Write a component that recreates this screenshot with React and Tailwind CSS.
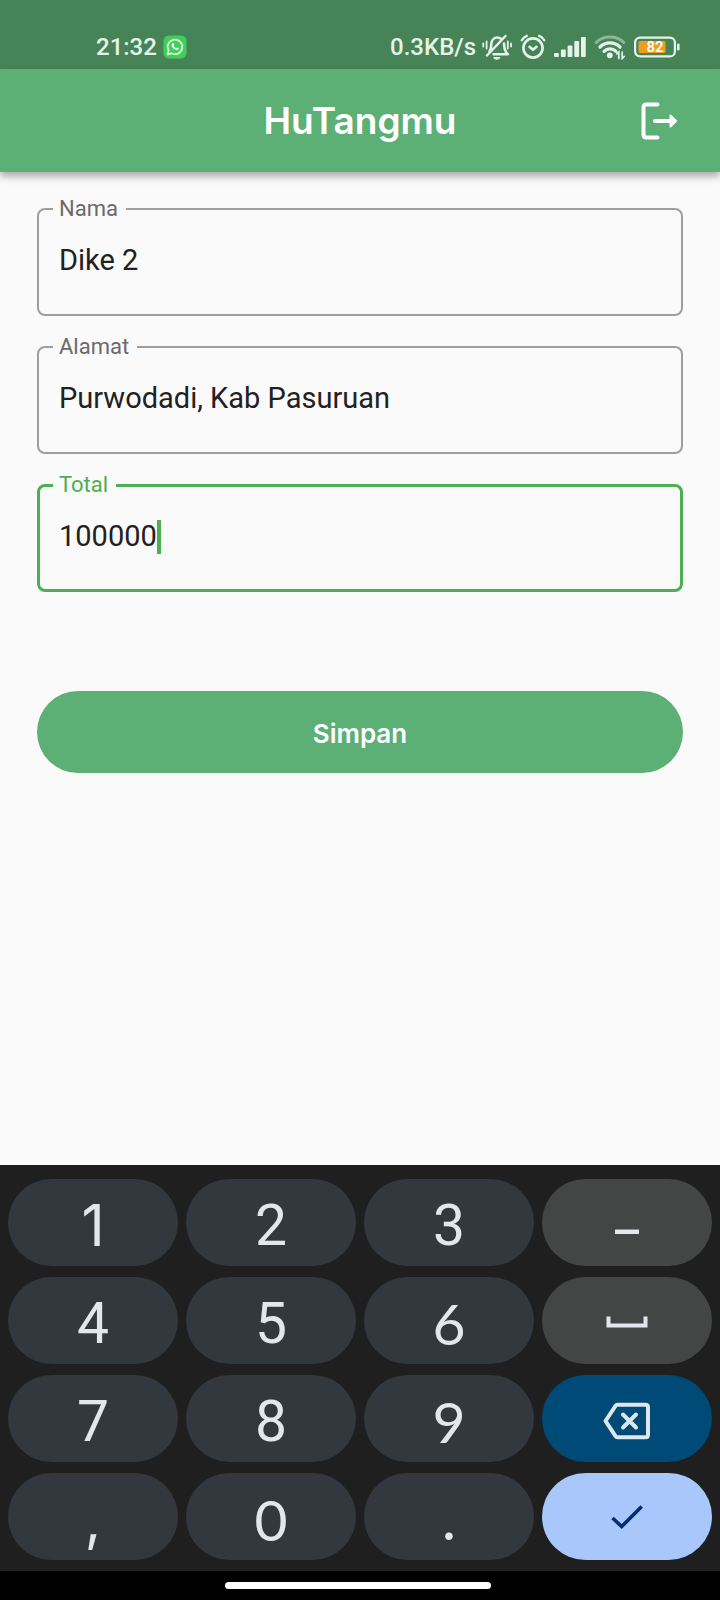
import { useState } from "react";

function WhatsAppBadge() {
  return (
    <svg viewBox="0 0 24 24" className="size-6 shrink-0" aria-hidden="true">
      <rect x="0.5" y="0.5" width="23" height="23" rx="5.5" fill="#3fcf5a" />
      <path
        d="M4.600 19.400l1-4a7.300 7.300 0 1 1 2.900 2.900z"
        fill="none"
        stroke="#e9fbee"
        strokeWidth="1.600"
        strokeLinejoin="round"
      />
      <path
        d="M9.600 8.200c.5-.3.900-.2 1.100.3l.5 1.200c.1.300-.6 1-.5 1.200.5 1 1.300 1.800 2.400 2.300.3.100 1-.9 1.300-.8l1.300.7c.3.200.2 1-.3 1.500-.8.700-2 .6-3.300 0-1.500-.7-2.700-1.900-3.300-3.300-.5-1.200-.2-2.500.8-3.100z"
        fill="#e9fbee"
      />
    </svg>
  );
}

function MutedBell() {
  return (
    <svg viewBox="0 0 30 26" className="h-[26px] w-[30px] shrink-0" aria-hidden="true" fill="none" stroke="#e6f3e9" strokeLinecap="round" strokeLinejoin="round">
      <path d="M7.500 17.500c1.500-2 1.700-4 1.800-7.500C9.500 6 12 3.500 15.500 3.500c1.500 0 2.500.4 3.400 1.200" strokeWidth="2.500" />
      <path d="M22 9.500c.3 5 .6 8 4 10.700H11.500" strokeWidth="2.500" />
      <path d="M23.500 2L5 21.500" strokeWidth="2.500" />
      <path d="M12 23.800h5.500c-1 1.500-4.500 1.500-5.500 0z" strokeWidth="1.500" fill="#e6f3e9" />
      <path d="M1.200 9.500v3M4.600 7.500v7M25.800 7.500v7M29 9.500v3" strokeWidth="1.800" />
    </svg>
  );
}

function AlarmClock() {
  return (
    <svg viewBox="0 0 26 26" className="size-[26px] shrink-0" aria-hidden="true" fill="none" stroke="#e6f3e9" strokeWidth="2.600" strokeLinecap="round" strokeLinejoin="round">
      <circle cx="13" cy="14" r="9.600" />
      <path d="M1.800 6.200C3 4 4.500 2.600 6.800 1.800M24.200 6.200C23 4 21.500 2.600 19.200 1.800" strokeWidth="2.400" />
      <path d="M9.500 12.800l3.500 3 3.500-3" />
    </svg>
  );
}

function SignalBars() {
  return (
    <svg viewBox="0 0 32 22" className="h-[22px] w-8 shrink-0" aria-hidden="true" fill="#e6f3e9">
      <rect x="0" y="17" width="4.800" height="4" rx="1" />
      <rect x="6.900" y="13.500" width="4.800" height="7.500" rx="1" />
      <rect x="13.600" y="9.500" width="4.800" height="11.500" rx="1" />
      <rect x="20.300" y="5" width="4.800" height="16" rx="1" />
      <rect x="27" y="1" width="4.800" height="20" rx="1" />
    </svg>
  );
}

function Wifi() {
  return (
    <svg viewBox="0 0 32 26" className="h-[26px] w-8 shrink-0" aria-hidden="true" fill="none" strokeLinecap="round">
      <path d="M2.200 8.500C9.500 1.200 22.500 1.200 29.800 8.500" stroke="#8db79a" strokeWidth="3" />
      <path d="M6 13C11.500 7.500 20.500 7.500 26 13" stroke="#e6f3e9" strokeWidth="3.200" />
      <path d="M10 17.300c3.300-3.300 8.700-3.300 12 0" stroke="#e6f3e9" strokeWidth="3.200" />
      <circle cx="15.800" cy="21.300" r="2.900" fill="#e6f3e9" />
      <path d="M24.800 24.500v-6.500l-2 2M28.200 18v6.500l2-2" stroke="#e6f3e9" strokeWidth="1.700" />
    </svg>
  );
}

function Battery() {
  return (
    <svg viewBox="0 0 46 22" className="h-[22px] w-[46px] shrink-0" role="img" aria-label="82%">
      <rect x="1.100" y="1.600" width="39.800" height="18.800" rx="5" fill="none" stroke="#e6f3e9" strokeWidth="2.200" />
      <rect x="4.500" y="5" width="27" height="12" rx="1.500" fill="#ee9d20" />
      <rect x="43" y="7.500" width="2.600" height="7" rx="1.300" fill="#e6f3e9" />
      <text x="21" y="16" textAnchor="middle" fontSize="15" fontWeight="600" fill="#fff" fontFamily="Roboto, sans-serif">
        82
      </text>
    </svg>
  );
}

function StatusBar() {
  return (
    <div className="flex h-[69px] items-center justify-between bg-[#468458] pt-[25px] pr-10 pl-24 text-[24px] font-medium text-[#e6f3e9]">
      <div className="flex items-center gap-1.5">
        <span>21:32</span>
        <WhatsAppBadge />
      </div>
      <div className="flex items-center gap-2">
        <div className="flex items-center gap-1.5">
          <span>0.3KB/s</span>
          <MutedBell />
        </div>
        <AlarmClock />
        <SignalBars />
        <Wifi />
        <Battery />
      </div>
    </div>
  );
}

function AppBar() {
  return (
    <header className="relative grid h-[103px] grid-cols-[1fr_auto_1fr] items-center bg-[#5db075] px-10 shadow-[0_4px_8px_rgba(0,0,0,0.35)]">
      <h1 className="col-start-2 font-[Inter,sans-serif] text-[37px] font-semibold text-white">HuTangmu</h1>
      <button type="button" aria-label="Keluar" className="cursor-pointer justify-self-end">
        <svg viewBox="0 0 40 40" className="size-10" fill="none" stroke="#fff" strokeWidth="4" strokeLinecap="round" strokeLinejoin="round">
          <path d="M17.500 3.500H6.500q-3 0-3 3v27q0 3 3 3H17.500" />
          <path d="M15 20H30" />
          <path d="M30.500 14.500L36 20l-5.500 5.500z" fill="#fff" strokeWidth="2" />
        </svg>
      </button>
    </header>
  );
}

function Field({ id, label, value, onChange }) {
  return (
    <fieldset className="h-[119px] min-w-0 rounded-lg border-2 border-[#9e9e9e] pr-5 pl-[14px]">
      <legend className="flex h-6 items-center pr-2 pl-1.5 text-[22px] leading-6 text-[#6a6a6a]">
        <label htmlFor={id}>{label}</label>
      </legend>
      <input
        id={id}
        type="text"
        value={value}
        onChange={(e) => onChange(e.target.value)}
        className="mt-[22px] h-9 w-full bg-transparent pl-1.5 text-[29px] text-[#212121] outline-none"
      />
    </fieldset>
  );
}

function ActiveField({ id, label, value, onChange }) {
  return (
    <fieldset className="h-[119px] min-w-0 rounded-lg border-3 border-[#4caf50] pr-5 pl-[13px]">
      <legend className="flex h-6 items-center pr-2 pl-1.5 text-[22px] leading-6 text-[#4caf50]">
        <label htmlFor={id}>{label}</label>
      </legend>
      <div className="mt-[22px] flex items-center">
        <input
          id={id}
          type="text"
          inputMode="numeric"
          value={value}
          onChange={(e) => onChange(e.target.value)}
          className="field-sizing-content h-9 bg-transparent pl-1.5 text-[29px] text-[#212121] caret-transparent outline-none"
        />
        <span className="h-[34px] w-1 bg-[#4caf50]" />
      </div>
    </fieldset>
  );
}

const BASE = "flex h-[87px] cursor-pointer items-center justify-center rounded-full ";
const GLYPH = "pt-1.5 text-[57px] leading-none text-[#e3e6ea] ";
const ROBOTO = "font-[Roboto,sans-serif] ";
const INTER = "font-[Inter,sans-serif] ";
const NOTO = "font-['Noto_Sans',sans-serif] ";
const LATO = "font-[Lato,sans-serif] ";

function DigitKey({ children, face = ROBOTO }) {
  return (
    <button type="button" className={BASE + GLYPH + face + "bg-[#33373e]"}>
      {children}
    </button>
  );
}

function Keyboard() {
  return (
    <div className="grid grid-cols-4 gap-x-2 gap-y-[11px] bg-[#1f1f1f] px-2 pt-[14px] pb-[11px]">
      <DigitKey face={INTER}>1</DigitKey>
      <DigitKey>2</DigitKey>
      <DigitKey>3</DigitKey>
      <button type="button" className={BASE + GLYPH + NOTO + "bg-[#444645]"}>
        –
      </button>
      <DigitKey>4</DigitKey>
      <DigitKey>5</DigitKey>
      <DigitKey face={LATO}>6</DigitKey>
      <button type="button" aria-label="Spasi" className={BASE + "bg-[#444645] pt-0.5"}>
        <svg viewBox="0 0 42 12" className="h-3 w-[42px]" fill="none" stroke="#e3e6ea" strokeWidth="4">
          <path d="M2.500 0.500V9.500H39.500V0.500" />
        </svg>
      </button>
      <DigitKey>7</DigitKey>
      <DigitKey>8</DigitKey>
      <DigitKey face={LATO}>9</DigitKey>
      <button type="button" aria-label="Hapus" className={BASE + "bg-[#004a77] pt-1"}>
        <svg viewBox="0 0 48 38" className="h-[38px] w-12" fill="none" stroke="#dde7ee" strokeWidth="4" strokeLinecap="round" strokeLinejoin="round">
          <path d="M14.500 2.800H42.500q2.500 0 2.500 2.500V32.700q0 2.500-2.500 2.500H14.500q-1.300 0-2-1L2.500 19 12.500 3.800q.7-1 2-1z" />
          <path d="M20 12.500l13 13M33 12.500l-13 13" />
        </svg>
      </button>
      <DigitKey face={INTER}>,</DigitKey>
      <DigitKey face={LATO}>0</DigitKey>
      <DigitKey face={INTER}>.</DigitKey>
      <button type="button" aria-label="Selesai" className={BASE + "bg-[#a8c7fa]"}>
        <svg viewBox="0 0 32 24" className="h-6 w-8" fill="none" stroke="#062e6f" strokeWidth="3.600">
          <path d="M1.500 13L10.700 21.500 30.700 1.500" />
        </svg>
      </button>
    </div>
  );
}

export default function App() {
  const [nama, setNama] = useState("Dike 2");
  const [alamat, setAlamat] = useState("Purwodadi, Kab Pasuruan");
  const [total, setTotal] = useState("100000");

  return (
    <div className="flex min-h-screen flex-col bg-[#fafafa] font-[Roboto,sans-serif]">
      <StatusBar />
      <AppBar />
      <main className="flex-1 px-[37px] pt-[25px]">
        <form onSubmit={(e) => e.preventDefault()}>
          <div className="flex flex-col gap-[19px]">
            <Field id="nama" label="Nama" value={nama} onChange={setNama} />
            <Field id="alamat" label="Alamat" value={alamat} onChange={setAlamat} />
            <ActiveField id="total" label="Total" value={total} onChange={setTotal} />
          </div>
          <button type="submit" className="mt-[99px] h-[82px] w-full cursor-pointer rounded-full bg-[#5db075] pt-0.5 font-[Inter,sans-serif] text-[26px] font-semibold text-white">
            Simpan
          </button>
        </form>
      </main>
      <Keyboard />
      <div className="flex h-[29px] justify-center bg-black pt-[11px] pr-1">
        <div className="h-[7px] w-[266px] rounded-full bg-white" />
      </div>
    </div>
  );
}
